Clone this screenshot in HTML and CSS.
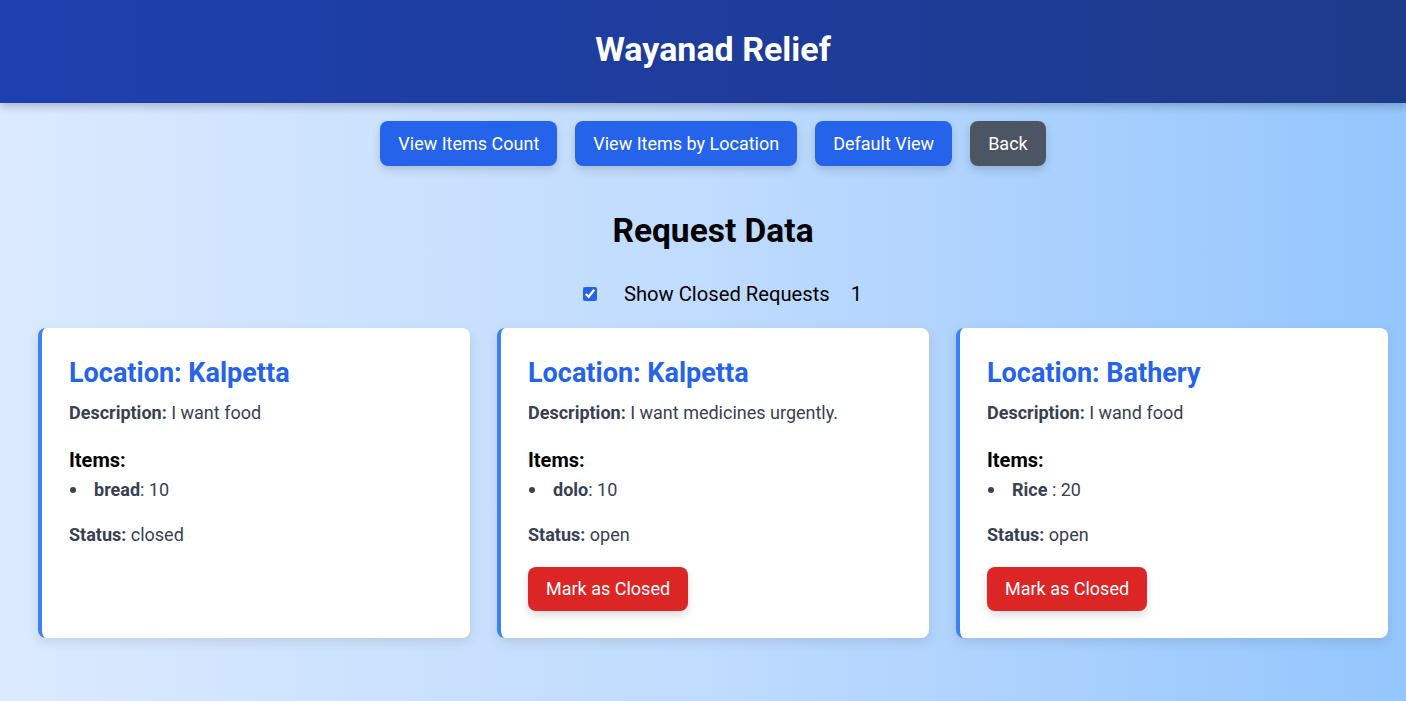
FILE: index.html
```html
<!DOCTYPE html>
<html>
<head>
<meta charset="utf-8">
<link rel="stylesheet" href="styles.css">
</head>
<body>
<header class="topbar">
  <h1 class="brand">Wayanad Relief</h1>
</header>
<div class="page">
  <nav class="actions">
    <button class="btn btn-blue">View Items Count</button>
    <button class="btn btn-blue">View Items by Location</button>
    <button class="btn btn-blue">Default View</button>
    <button class="btn btn-gray">Back</button>
  </nav>
  <h2 class="page-title">Request Data</h2>
  <div class="toggle-row">
    <input type="checkbox" class="toggle" checked>
    <span class="toggle-label">Show Closed Requests</span>
    <span class="toggle-count">1</span>
  </div>
  <main class="cards">
    <section class="card">
      <h3 class="card-title">Location: Kalpetta</h3>
      <p class="line"><strong>Description:</strong> I want food</p>
      <h4 class="items-title">Items:</h4>
      <ul class="items">
        <li><strong>bread</strong>: 10</li>
      </ul>
      <p class="line status"><strong>Status:</strong> closed</p>
    </section>
    <section class="card">
      <h3 class="card-title">Location: Kalpetta</h3>
      <p class="line"><strong>Description:</strong> I want medicines urgently.</p>
      <h4 class="items-title">Items:</h4>
      <ul class="items">
        <li><strong>dolo</strong>: 10</li>
      </ul>
      <p class="line status"><strong>Status:</strong> open</p>
      <button class="btn btn-red">Mark as Closed</button>
    </section>
    <section class="card">
      <h3 class="card-title">Location: Bathery</h3>
      <p class="line"><strong>Description:</strong> I wand food</p>
      <h4 class="items-title">Items:</h4>
      <ul class="items">
        <li><strong>Rice </strong>: 20</li>
      </ul>
      <p class="line status"><strong>Status:</strong> open</p>
      <button class="btn btn-red">Mark as Closed</button>
    </section>
  </main>
</div>
</body>
</html>
```
FILE: styles.css
```css
html, body {
  margin: 0;
  padding: 0;
}
body {
  font-family: Roboto, "Liberation Sans", sans-serif;
  background: linear-gradient(to right, #dbeafe 0%, #bfdbfe 50%, #93c5fd 100%);
  background-size: 1426px 100%;
  background-repeat: no-repeat;
  background-color: #9ac7fc;
  min-height: 701px;
  color: #000;
}
.topbar {
  height: 103px;
  padding-left: 20px;
  background: linear-gradient(to right, #1e40af, #1e3a8a);
  display: flex;
  align-items: center;
  justify-content: center;
  box-shadow: 0 4px 8px rgba(0,0,0,0.2);
  position: relative;
}
.brand {
  margin: 0;
  margin-top: -6px;
  color: #fff;
  font-size: 34px;
  line-height: 40px;
  font-weight: 700;
  text-shadow: 1px 1px 1px rgba(0,0,0,0.15);
}
.page {
  padding-left: 20px;
}
.actions {
  display: flex;
  justify-content: center;
  gap: 18px;
  margin-top: 18px;
}
.btn {
  border: none;
  border-radius: 8px;
  color: #fff;
  font-family: Roboto, "Liberation Sans", sans-serif;
  font-size: 18px;
  line-height: 27px;
  padding: 9px 18px;
  box-shadow: 0 4px 8px rgba(0,0,0,0.15);
  cursor: pointer;
}
.btn-blue { background: #2563eb; }
.btn-gray { background: #4b5563; }
.btn-red {
  background: #dc2626;
  margin-top: 18px;
  line-height: 26px;
  align-self: flex-start;
}
.page-title {
  margin: 45px 0 0;
  text-align: center;
  font-size: 33.5px;
  line-height: 40px;
  font-weight: 700;
}
.toggle-row {
  display: flex;
  justify-content: center;
  align-items: center;
  margin-top: 29px;
  font-size: 20.2px;
  line-height: 28px;
  padding-left: 19px;
}
.toggle {
  width: 14px;
  height: 14px;
  margin: 0 27px 0 0;
  accent-color: #2563eb;
}
.toggle-label { margin-right: 21px; }
.cards {
  display: grid;
  grid-template-columns: repeat(3, 1fr);
  gap: 27px;
  padding: 0 18px;
  margin-top: 20px;
}
.card {
  background: #fff;
  border-left: 4px solid #3b82f6;
  border-radius: 8px;
  padding: 27px 27px 27px;
  box-shadow: 0 4px 12px rgba(0,0,0,0.1);
  display: flex;
  flex-direction: column;
}
.card-title {
  margin: 0;
  color: #2563eb;
  font-size: 27px;
  line-height: 36px;
  font-weight: 700;
}
.line {
  margin: 8px 0 0;
  font-size: 18px;
  line-height: 28px;
  color: #374151;
}
.line.status { margin-top: 17px; }
.line strong { font-weight: 700; }
.items-title {
  margin: 19px 0 0;
  font-size: 20px;
  line-height: 28px;
  font-weight: 700;
}
.items {
  margin: 2px 0 0;
  padding: 0;
  list-style: none;
  font-size: 18px;
  line-height: 28px;
  color: #374151;
}
.items li {
  display: flex;
  align-items: center;
}
.items li::before {
  content: "";
  width: 6px;
  height: 6px;
  border-radius: 50%;
  background: #374151;
  margin: 0 18px 0 1px;
  flex: none;
}
.items li strong { font-weight: 700; white-space: pre; }
```
